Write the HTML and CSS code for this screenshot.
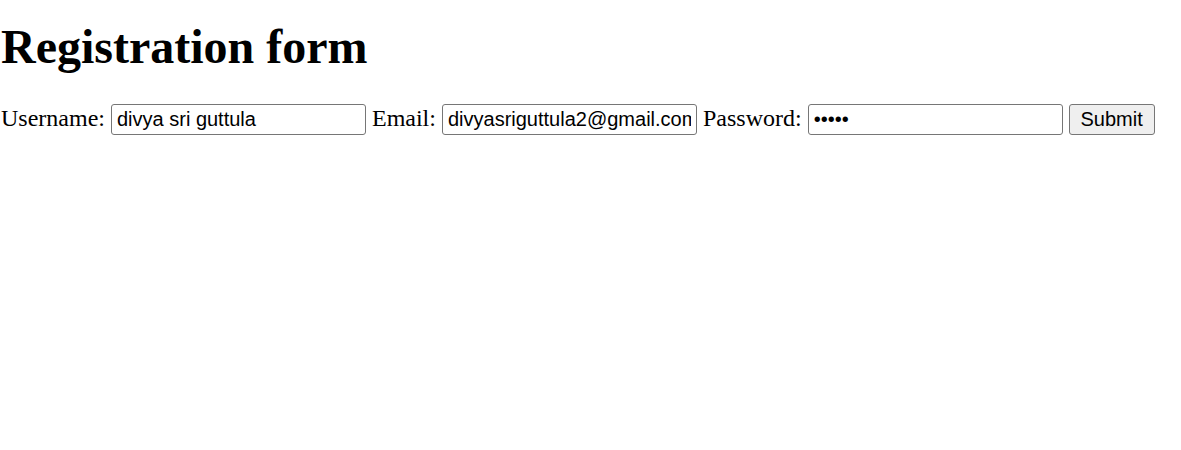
FILE: index.html
```html
<!DOCTYPE html>
<html>
<head>
<meta charset="utf-8">
<title>Registration form</title>
<link rel="stylesheet" href="styles.css">
</head>
<body>
<h1 class="title">Registration form</h1>
<form class="form">
<label class="label">Username:</label> <input class="field" type="text" value="divya sri guttula"> <label class="label">Email:</label> <input class="field" type="text" value="divyasriguttula2@gmail.com"> <label class="label">Password:</label> <input class="field" type="password" value="12345"> <button class="btn" type="button">Submit</button>
</form>
</body>
</html>
```
FILE: styles.css
```css
body {
  margin: 0;
  padding-left: 1px;
  font-family: "Liberation Serif", "Times New Roman", serif;
  font-size: 24px;
  color: #000;
  background: #fff;
}
.title {
  font-size: 48px;
  font-weight: bold;
  margin: 19px 0 30px 0;
  line-height: 55px;
}
.form {
  margin: 0;
  line-height: 28px;
}
.label {
  font-size: 24px;
}
.field {
  box-sizing: border-box;
  width: 255px;
  height: 31px;
  font-family: "Liberation Sans", Arial, sans-serif;
  font-size: 20px;
  padding: 1px 5px;
  border: 1px solid #767676;
  border-radius: 3px;
  color: #000;
  background: #fff;
  margin: 0;
  vertical-align: baseline;
}
.btn {
  box-sizing: border-box;
  width: 86px;
  height: 31px;
  font-family: "Liberation Sans", Arial, sans-serif;
  font-size: 20px;
  padding: 1px 9px;
  border: 1px solid #767676;
  border-radius: 3px;
  background: #efefef;
  color: #000;
  margin: 0;
}
```
